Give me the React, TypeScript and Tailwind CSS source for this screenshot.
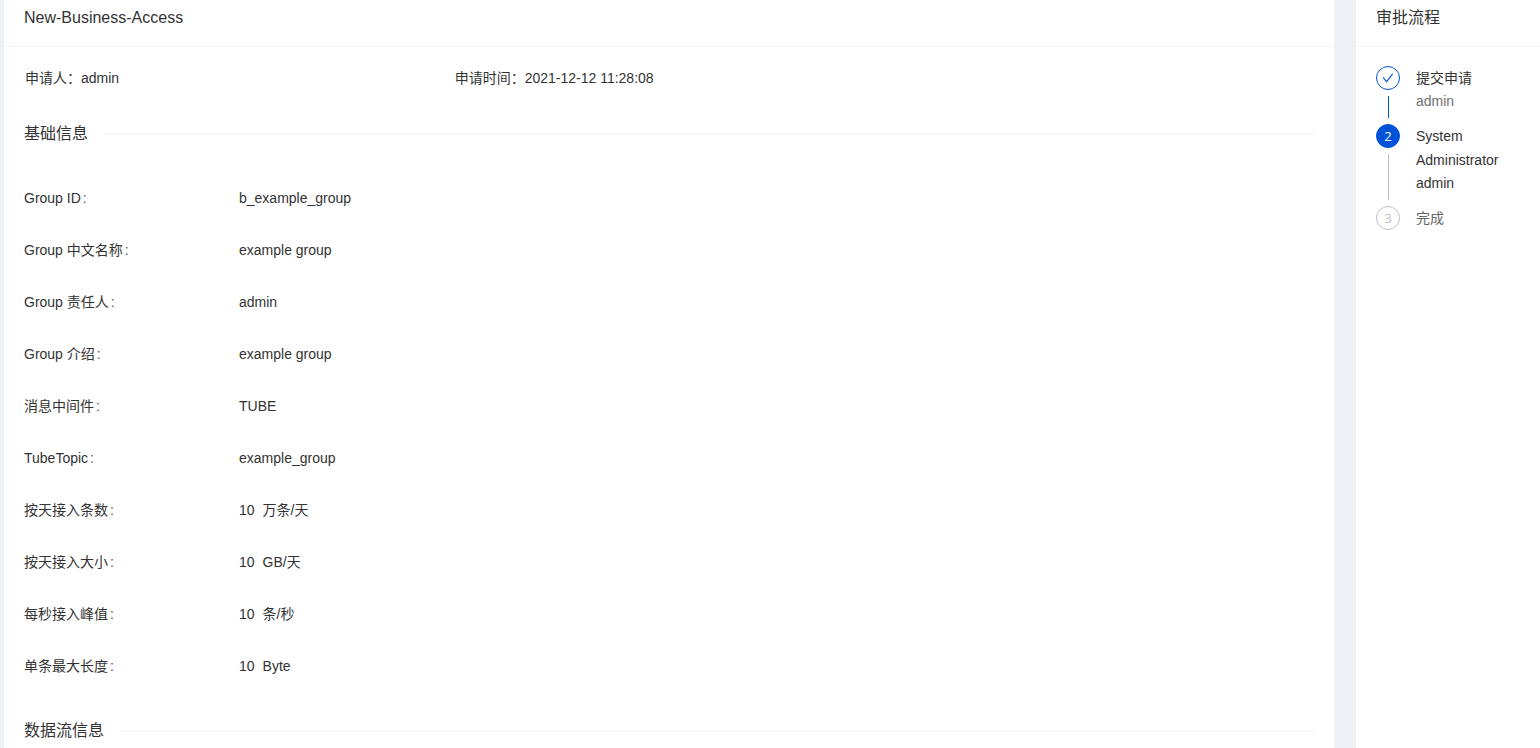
import React from 'react';
import clsx from 'clsx';

type StepStatus = 'finish' | 'process' | 'wait';

interface Field {
  label: string;
  value: string;
  unit?: string;
}

interface Step {
  title: string;
  description?: string;
  status: StepStatus;
}

const baseFields: Field[] = [
  { label: 'Group ID', value: 'b_example_group' },
  { label: 'Group 中文名称', value: 'example group' },
  { label: 'Group 责任人', value: 'admin' },
  { label: 'Group 介绍', value: 'example group' },
  { label: '消息中间件', value: 'TUBE' },
  { label: 'TubeTopic', value: 'example_group' },
  { label: '按天接入条数', value: '10', unit: '万条/天' },
  { label: '按天接入大小', value: '10', unit: 'GB/天' },
  { label: '每秒接入峰值', value: '10', unit: '条/秒' },
  { label: '单条最大长度', value: '10', unit: 'Byte' },
];

const steps: Step[] = [
  { title: '提交申请', description: 'admin', status: 'finish' },
  { title: 'System Administrator', description: 'admin', status: 'process' },
  { title: '完成', status: 'wait' },
];

const CardHeader: React.FC<{ title: string }> = ({ title }) => (
  <header className="border-b border-[#f4f4f4] px-5 pt-[6px] pb-4">
    <h2 className="text-[16px] leading-[24px]">{title}</h2>
  </header>
);

const SectionTitle: React.FC<{ children: React.ReactNode }> = ({ children }) => (
  <div className="flex items-center gap-4 pt-[27px] pb-[26px]">
    <h3 className="text-[16px] leading-[24px]">{children}</h3>
    <span className="h-[2px] flex-1 bg-[#f7f7f7]" />
  </div>
);

const FieldRow: React.FC<Field> = ({ label, value, unit }) => (
  <div className="grid grid-cols-6 py-[15px]">
    <dt>
      {label}
      <span className="ml-[2px] text-[#555555]">:</span>
    </dt>
    <dd className="col-span-5 flex gap-2">
      <span>{value}</span>
      {unit && <span>{unit}</span>}
    </dd>
  </div>
);

const CheckIcon = () => (
  <svg viewBox="64 64 896 896" className="h-3 w-3" fill="currentColor" aria-hidden="true">
    <path d="M912 190h-69.9c-9.8 0-19.1 4.5-25.1 12.2L404.7 724.5 207 474a32 32 0 00-25.1-12.2H112c-6.7 0-10.4 7.7-6.3 12.9l273.9 347c12.8 16.2 37.4 16.2 50.3 0l488.4-618.9c4.1-5.1.4-12.8-6.3-12.8z" />
  </svg>
);

const StepItem: React.FC<Step & { index: number; last: boolean }> = ({
  title,
  description,
  status,
  index,
  last,
}) => (
  <li className="flex gap-4">
    <div className="flex flex-col items-center gap-[6px]">
      <span
        className={clsx(
          "flex h-6 w-6 items-center justify-center rounded-full border font-['Open_Sans',sans-serif] text-[13px] leading-[22px]",
          status === 'finish' && 'border-[#0052d9] text-[#0052d9]',
          status === 'process' && 'border-[#0052d9] bg-[#0052d9] text-white',
          status === 'wait' && 'border-[#bfbfbf] text-[#bfbfbf]'
        )}
      >
        {status === 'finish' ? <CheckIcon /> : index + 1}
      </span>
      {!last && (
        <span
          className={clsx(
            'mb-[6px] w-px flex-1',
            status === 'finish' ? 'bg-[#0052d9]' : 'bg-[#bfbfbf]'
          )}
        />
      )}
    </div>
    <div className={clsx('min-w-0 flex-1', !last && 'pb-3')}>
      <div className={clsx('leading-[24px]', status === 'wait' && 'text-[#666666]')}>{title}</div>
      {description && (
        <div className={clsx(status !== 'process' && 'text-[#707070]')}>{description}</div>
      )}
    </div>
  </li>
);

export default function App() {
  return (
    <div className="flex min-h-screen gap-[22px] bg-[#eef2f7] pl-1 font-['Liberation_Sans','Noto_Sans_CJK_SC',sans-serif] text-[14px] leading-[22px] text-[#333333]">
      <main className="min-w-0 flex-1 bg-white">
        <CardHeader title="New-Business-Access" />
        <div className="px-5 pt-5">
          <div className="grid grid-cols-3 pb-[6px] pl-px">
            <p>申请人：admin</p>
            <p>申请时间：2021-12-12 11:28:08</p>
          </div>

          <SectionTitle>基础信息</SectionTitle>
          <dl>
            {baseFields.map((field) => (
              <FieldRow key={field.label} {...field} />
            ))}
          </dl>

          <SectionTitle>数据流信息</SectionTitle>
        </div>
      </main>

      <aside className="w-46 shrink-0 bg-white">
        <CardHeader title="审批流程" />
        <ol className="px-5 pt-[19px]">
          {steps.map((step, index) => (
            <StepItem key={step.title} {...step} index={index} last={index === steps.length - 1} />
          ))}
        </ol>
      </aside>
    </div>
  );
}
